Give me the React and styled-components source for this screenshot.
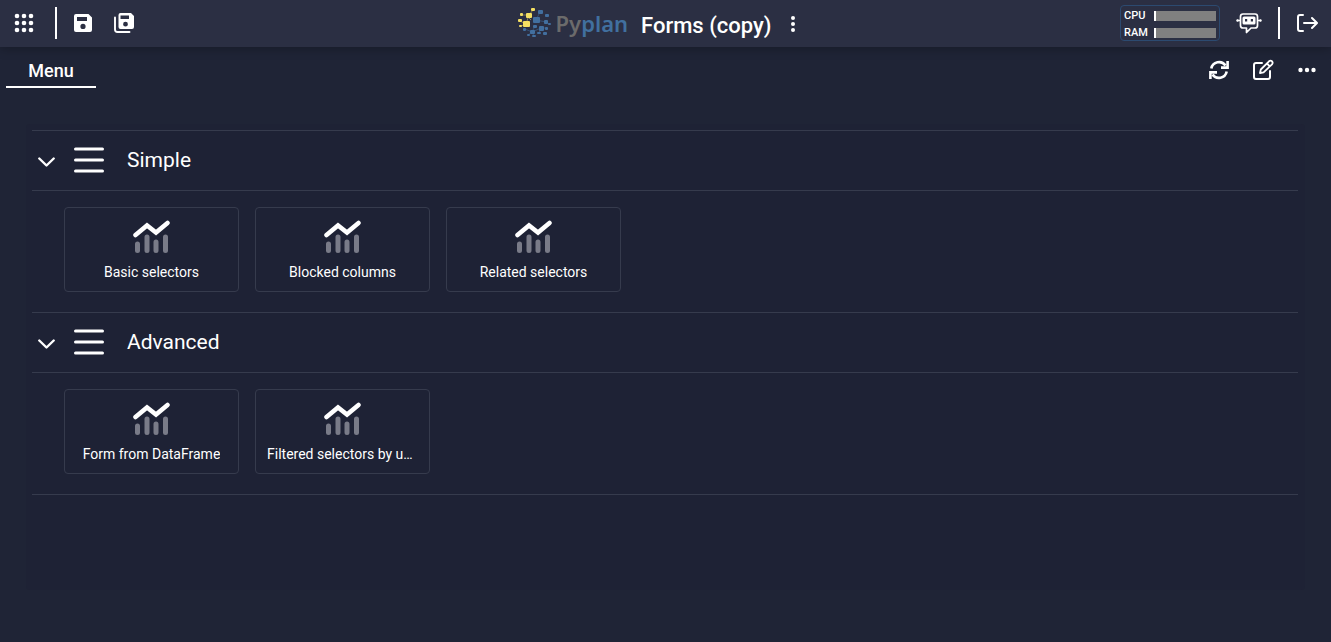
import React, { useState } from "react";
import styled, { createGlobalStyle } from "styled-components";

const GlobalStyle = createGlobalStyle`
  *, *::before, *::after { box-sizing: border-box; }
  html, body, #root { min-height: 100%; margin: 0; }
  body {
    background: #1f2436;
    color: #fff;
    font-family: Roboto, "Liberation Sans", sans-serif;
    font-size: 14px;
  }
`;

const Header = styled.header`
  display: grid;
  grid-template-columns: 1fr auto 1fr;
  align-items: center;
  height: 47px;
  padding-bottom: 1px;
  background: #2b2f43;
  box-shadow: 0 2px 10px rgba(0, 0, 0, 0.25);
`;

const HeaderGroup = styled.div`
  display: flex;
  align-items: center;
  justify-content: ${(p) => p.$align || "flex-start"};
  padding-right: ${(p) => p.$end || 0}px;
`;

const IconButton = styled.button`
  display: inline-flex;
  align-items: center;
  justify-content: center;
  width: ${(p) => p.$width || 44}px;
  height: 40px;
  padding: 0;
  border: 0;
  background: transparent;
  color: #fff;
  cursor: pointer;
  svg { display: block; }
`;

const Divider = styled.span`
  width: 2px;
  height: 32px;
  margin: 0 ${(p) => p.$gap}px;
  background: #fff;
`;

const Brand = styled.a`
  display: flex;
  align-items: center;
  gap: 4px;
  color: #6b6b6b;
  font: 600 22px/32px "Noto Sans", "Open Sans", sans-serif;
  text-decoration: none;
`;

const BrandAccent = styled.span`
  color: #41709f;
`;

const AppTitle = styled.h1`
  margin: 0 2px 0 13px;
  padding-top: 5px;
  font-size: 22px;
  line-height: 33px;
  font-weight: 500;
`;

const Usage = styled.div`
  display: flex;
  flex-direction: column;
  justify-content: center;
  width: 100px;
  height: 36px;
  margin-right: 8px;
  padding: 2px 3px 0;
  border: 1px solid #2c4a70;
  border-radius: 4px;
`;

const UsageRow = styled.div`
  display: flex;
  align-items: center;
  justify-content: space-between;
  height: 17px;
  font-size: 11px;
  line-height: 19px;
  font-weight: 500;
`;

const UsageBar = styled.span`
  width: 62px;
  height: 10px;
  border-left: 2px solid #fff;
  background: #808080;
`;

const Toolbar = styled.nav`
  display: flex;
  align-items: center;
  justify-content: space-between;
  height: 46px;
  padding: 0 2px 0 6px;
`;

const Tab = styled.button`
  width: 90px;
  height: 36px;
  padding: 4px 0 0;
  border: 0;
  border-bottom: 2px solid #fff;
  background: transparent;
  color: #fff;
  font: 500 18px/30px Roboto, sans-serif;
  cursor: pointer;
`;

const Content = styled.main`
  min-height: calc(100vh - 176px);
  margin: 31px 26px 52px;
  padding: 6px 7px 6px 6px;
  border-radius: 4px;
  background: #1e2235;
`;

const Section = styled.section`
  border-top: 1px solid #363b4d;
  &:last-child { border-bottom: 1px solid #363b4d; }
`;

const SectionHeader = styled.div`
  display: flex;
  align-items: center;
  height: 60px;
  padding-left: 6px;
  border-bottom: 1px solid #363b4d;
`;

const Toggle = styled.button`
  display: flex;
  align-items: center;
  padding: 2px 0 0;
  border: 0;
  background: transparent;
  color: #fff;
  cursor: pointer;
  svg { transform: rotate(${(p) => (p.$open ? 0 : -90)}deg); }
`;

const SectionTitle = styled.h2`
  display: flex;
  align-items: center;
  gap: 23px;
  margin: 0 0 0 19px;
  padding-bottom: 2px;
  font-size: 21px;
  line-height: 32px;
  font-weight: 400;
`;

const Cards = styled.div`
  display: flex;
  flex-wrap: wrap;
  gap: 16px;
  padding: 16px 32px 20px;
`;

const Card = styled.button`
  display: flex;
  flex-direction: column;
  align-items: center;
  width: 175px;
  height: 85px;
  padding: 12px 8px 0;
  border: 1px solid #363b4d;
  border-radius: 4px;
  background: transparent;
  color: #fff;
  cursor: pointer;
`;

const CardLabel = styled.span`
  max-width: 151px;
  margin-top: 8px;
  overflow: hidden;
  font: 400 14px/20px Roboto, sans-serif;
  text-overflow: ellipsis;
  white-space: nowrap;
`;

const AppsIcon = () => (
  <svg width="20" height="20" viewBox="0 0 20 20" fill="currentColor" aria-hidden="true">
    {[3, 10, 17].map((y) => [3, 10, 17].map((x) => <circle key={`${x}-${y}`} cx={x} cy={y} r="2.3" />))}
  </svg>
);

const SaveIcon = () => (
  <svg width="18" height="18" viewBox="0 0 18 18" aria-hidden="true">
    <path fill="currentColor" fillRule="evenodd" d="M2 0H14.500L18 3.500V16a2 2 0 0 1-2 2H2a2 2 0 0 1-2-2V2a2 2 0 0 1 2-2ZM3 3V7H13V3ZM9 9.800a2.600 2.600 0 1 0 0 5.200a2.600 2.600 0 1 0 0-5.200Z" />
  </svg>
);

const SaveAllIcon = () => (
  <svg width="20" height="20" viewBox="0 0 20 20" aria-hidden="true">
    <path fill="currentColor" fillRule="evenodd" d="M6.500 0H17L20 3V14a2 2 0 0 1-2 2H6.500a2 2 0 0 1-2-2V2a2 2 0 0 1 2-2ZM6.500 2.500V6H15V2.500ZM11.500 8.800a2.400 2.400 0 1 0 0 4.800a2.400 2.400 0 1 0 0-4.800Z" />
    <path fill="none" stroke="currentColor" strokeWidth="1.900" strokeLinecap="round" d="M1 4.500V16.500Q1 19 3.500 19H15.500" />
  </svg>
);

const goldNodes = [[13, 0, 4, 3], [2, 5, 3, 3], [8, 5, 6, 5], [0, 11, 4, 3], [5, 13, 7, 6], [1, 17, 3, 2]];
const blueNodes = [
  [20, 2, 5, 4], [27, 6, 4, 3], [15, 9, 7, 6], [26, 12, 4, 4], [30, 15, 3, 2],
  [15, 17, 4, 3], [21, 18, 5, 5], [27, 19, 3, 3], [5, 20, 3, 3], [12, 22, 5, 4],
  [19, 24, 4, 2], [25, 24, 4, 3], [9, 26, 3, 2], [14, 27, 4, 2],
];

const LogoIcon = () => (
  <svg width="34" height="30" viewBox="0 0 34 30" aria-hidden="true">
    <path stroke="#f1d75b" strokeWidth="0.700" strokeOpacity="0.700" d="M15 2L11 7L8 16M4 7H10M2 13L8 16L3 18M10 9L13 12" fill="none" />
    <path stroke="#3d6a9b" strokeWidth="0.700" strokeOpacity="0.800" d="M22 4L18 12M18 12L28 14M23 20L14 24L17 18M23 20L21 25M23 20L28 20M14 24L7 21M14 24L10 27M14 24L16 28M28 14L31 16" fill="none" />
    {goldNodes.map(([x, y, w, h]) => <rect key={`${x}-${y}`} x={x} y={y} width={w} height={h} rx="1" fill="#f4df62" />)}
    {blueNodes.map(([x, y, w, h]) => <rect key={`${x}-${y}`} x={x} y={y} width={w} height={h} rx="1" fill="#426f9f" />)}
  </svg>
);

const KebabIcon = () => (
  <svg width="6" height="18" viewBox="0 0 6 18" fill="currentColor" aria-hidden="true">
    <circle cx="3" cy="4" r="2" /><circle cx="3" cy="10" r="2" /><circle cx="3" cy="16" r="2" />
  </svg>
);

const BotIcon = () => (
  <svg width="26" height="22" viewBox="0 0 26 22" aria-hidden="true">
    <path fill="none" stroke="currentColor" strokeWidth="1.700" strokeLinejoin="round" d="M7 2H19Q21.500 2 21.500 4.500V13.500Q21.500 16 19 16H15L10.500 20.500V16H7Q4.500 16 4.500 13.500V4.500Q4.500 2 7 2Z" />
    <path fill="currentColor" fillRule="evenodd" d="M8 4.500H18a1.500 1.500 0 0 1 1.500 1.500V11a1.500 1.500 0 0 1-1.500 1.500H8a1.500 1.500 0 0 1-1.500-1.500V6a1.500 1.500 0 0 1 1.500-1.500ZM9 7V9.500H11.200V7ZM14.800 7V9.500H17V7Z" />
    <path stroke="currentColor" strokeWidth="1.500" d="M1 8.500H4M22 8.500H25" />
    <circle cx="1.500" cy="8.500" r="1.200" fill="currentColor" /><circle cx="24.500" cy="8.500" r="1.200" fill="currentColor" />
  </svg>
);

const LogoutIcon = () => (
  <svg width="22" height="20" viewBox="0 0 22 20" fill="none" stroke="currentColor" strokeWidth="2" strokeLinecap="round" strokeLinejoin="round" aria-hidden="true">
    <path d="M7 2H4Q2 2 2 4V16Q2 18 4 18H7M8 10H20.500M16 5L21 10L16 15" />
  </svg>
);

const RefreshIcon = () => (
  <svg width="20" height="20" viewBox="0 0 20 20" fill="none" stroke="currentColor" strokeWidth="2.600" aria-hidden="true">
    <path d="M2.300 8.500A7.900 7.900 0 0 1 16.500 5.500M17.700 11.500A7.900 7.900 0 0 1 3.500 14.500" />
    <path d="M18.600 1V7.600H12M1.400 19V12.400H8" />
  </svg>
);

const EditIcon = () => (
  <svg width="22" height="22" viewBox="0 0 22 22" fill="none" stroke="currentColor" strokeWidth="2" strokeLinecap="round" strokeLinejoin="round" aria-hidden="true">
    <path d="M10 4H4Q2 4 2 6V18Q2 20 4 20H16Q18 20 18 18V12" />
    <path strokeWidth="1.800" d="M8 14L8.800 10.500L17 2.300Q18.500 1 20 2.300Q21.300 3.800 20 5.300L11.600 13.300ZM15 4.500L17.800 7.300" />
  </svg>
);

const MoreIcon = () => (
  <svg width="18" height="6" viewBox="0 0 18 6" fill="currentColor" aria-hidden="true">
    <circle cx="2.500" cy="3" r="2.200" /><circle cx="9" cy="3" r="2.200" /><circle cx="15.500" cy="3" r="2.200" />
  </svg>
);

const ChevronIcon = () => (
  <svg width="17" height="10" viewBox="0 0 17 10" fill="none" stroke="currentColor" strokeWidth="2.400" strokeLinecap="round" strokeLinejoin="round" aria-hidden="true">
    <path d="M1.300 1.500L8.500 8.500L15.700 1.500" />
  </svg>
);

const BarsIcon = () => (
  <svg width="30" height="26" viewBox="0 0 30 26" stroke="currentColor" strokeWidth="3" strokeLinecap="round" aria-hidden="true">
    <path d="M1.500 2H28.500M1.500 13H28.500M1.500 24H28.500" />
  </svg>
);

const ChartIcon = () => (
  <svg width="37" height="34" viewBox="0 0 37 34" fill="none" strokeLinecap="round" strokeLinejoin="round" aria-hidden="true">
    <path stroke="#797b88" strokeWidth="5" d="M4.500 24V30.500M14 17V30.500M23 22V30.500M32.500 17V30.500" />
    <path stroke="#fff" strokeWidth="4.500" strokeLinejoin="miter" d="M2.500 15L14 5.500L23 12.500L34.500 3" />
  </svg>
);

const sections = [
  { title: "Simple", items: ["Basic selectors", "Blocked columns", "Related selectors"] },
  { title: "Advanced", items: ["Form from DataFrame", "Filtered selectors by user"] },
];

function MenuSection({ title, items }) {
  const [open, setOpen] = useState(true);
  return (
    <Section>
      <SectionHeader>
        <Toggle type="button" $open={open} aria-expanded={open} aria-label={title} onClick={() => setOpen(!open)}>
          <ChevronIcon />
        </Toggle>
        <SectionTitle><BarsIcon />{title}</SectionTitle>
      </SectionHeader>
      {open && (
        <Cards>
          {items.map((item) => (
            <Card key={item} type="button"><ChartIcon /><CardLabel>{item}</CardLabel></Card>
          ))}
        </Cards>
      )}
    </Section>
  );
}

export default function App() {
  return (
    <>
      <GlobalStyle />
      <Header>
        <HeaderGroup>
          <IconButton $width={47} aria-label="Applications"><AppsIcon /></IconButton>
          <Divider $gap={8} />
          <IconButton $width={36} aria-label="Save"><SaveIcon /></IconButton>
          <IconButton $width={46} aria-label="Save all"><SaveAllIcon /></IconButton>
        </HeaderGroup>
        <HeaderGroup>
          <Brand href="#"><LogoIcon /><span>Py<BrandAccent>plan</BrandAccent></span></Brand>
          <AppTitle>Forms (copy)</AppTitle>
          <IconButton $width={40} aria-label="Options"><KebabIcon /></IconButton>
        </HeaderGroup>
        <HeaderGroup $align="flex-end" $end={5}>
          <Usage>
            <UsageRow>CPU<UsageBar /></UsageRow>
            <UsageRow>RAM<UsageBar /></UsageRow>
          </Usage>
          <IconButton $width={42} aria-label="Assistant"><BotIcon /></IconButton>
          <Divider $gap={8} />
          <IconButton $width={38} aria-label="Log out"><LogoutIcon /></IconButton>
        </HeaderGroup>
      </Header>
      <Toolbar>
        <Tab type="button">Menu</Tab>
        <HeaderGroup>
          <IconButton aria-label="Refresh"><RefreshIcon /></IconButton>
          <IconButton aria-label="Edit"><EditIcon /></IconButton>
          <IconButton aria-label="More"><MoreIcon /></IconButton>
        </HeaderGroup>
      </Toolbar>
      <Content>
        {sections.map((section) => <MenuSection key={section.title} {...section} />)}
      </Content>
    </>
  );
}
